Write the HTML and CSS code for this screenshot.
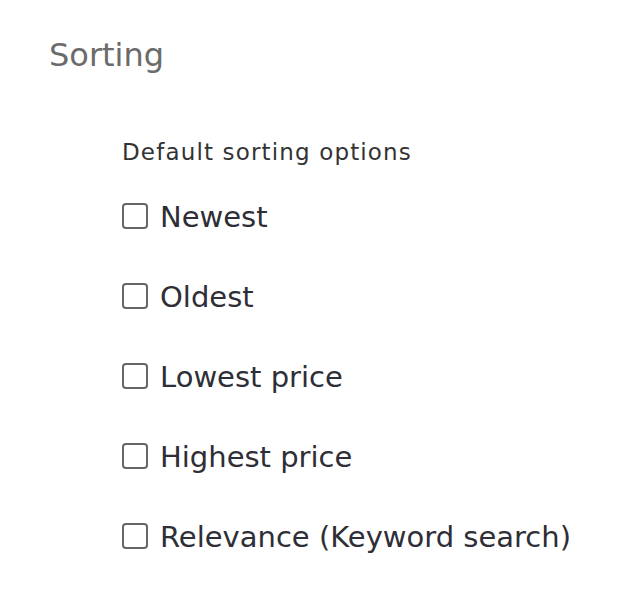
FILE: index.html
```html
<!DOCTYPE html>
<html>
<head>
<meta charset="utf-8">
<link rel="stylesheet" href="styles.css">
</head>
<body>
<div class="page">
  <h2 class="title">Sorting</h2>
  <div class="group">
    <div class="group-label">Default sorting options</div>
    <ul class="options">
      <li class="option"><span class="box"></span><span class="label">Newest</span></li>
      <li class="option"><span class="box"></span><span class="label">Oldest</span></li>
      <li class="option"><span class="box"></span><span class="label">Lowest price</span></li>
      <li class="option"><span class="box"></span><span class="label">Highest price</span></li>
      <li class="option"><span class="box"></span><span class="label">Relevance (Keyword search)</span></li>
    </ul>
  </div>
</div>
</body>
</html>
```
FILE: styles.css
```css
html, body {
  margin: 0;
  padding: 0;
  background: #ffffff;
}
body {
  font-family: "DejaVu Sans", "Open Sans", sans-serif;
  color: #333333;
}
.page {
  padding: 35px 0 0 49px;
}
.title {
  margin: 0;
  font-size: 32px;
  font-weight: 400;
  color: #6b6b6b;
  line-height: 40px;
}
.group {
  margin: 62px 0 0 73px;
}
.group-label {
  font-size: 23px;
  line-height: 30px;
  letter-spacing: 1.15px;
  color: #333333;
}
.options {
  list-style: none;
  margin: 30px 0 0 0;
  padding: 0;
  display: flex;
  flex-direction: column;
  gap: 40px;
}
.option {
  display: flex;
  align-items: center;
  gap: 12px;
  height: 40px;
}
.box {
  width: 22px;
  height: 22px;
  border: 2px solid #666666;
  border-radius: 4px;
  flex: none;
  margin-bottom: 3px;
}
.label {
  font-size: 29px;
  line-height: 40px;
  color: #2e2e36;
}
```
